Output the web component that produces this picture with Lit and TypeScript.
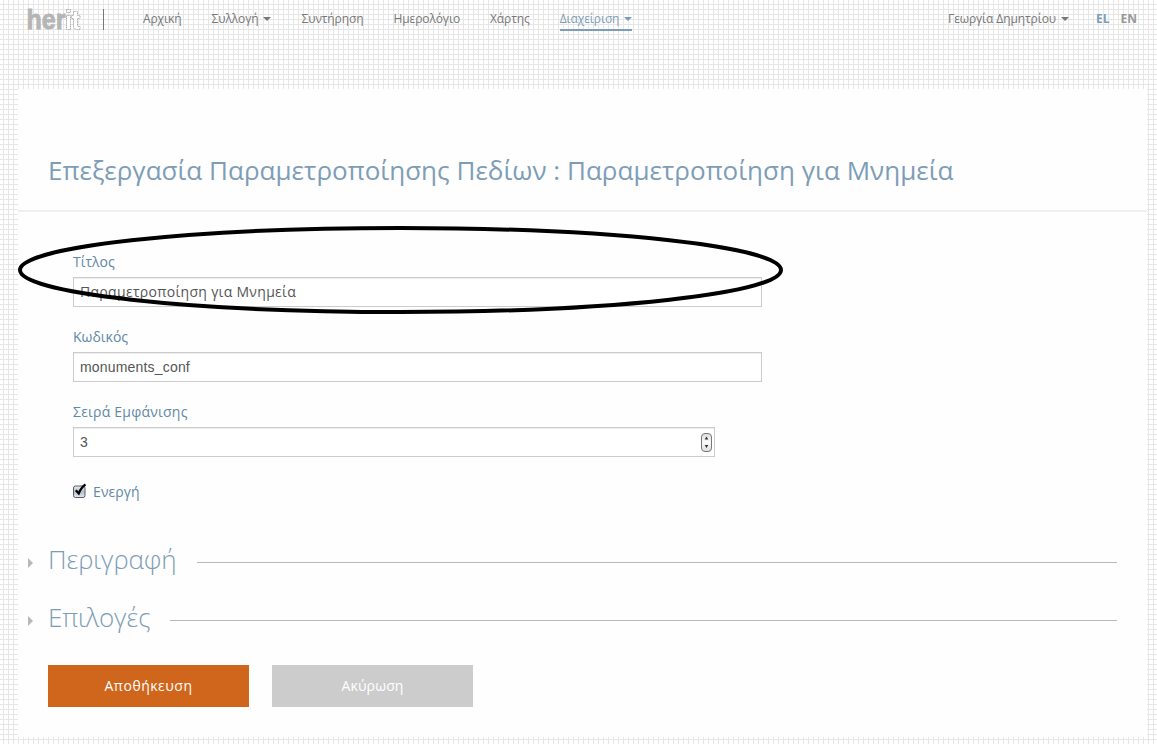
import { LitElement, html, css } from "lit";
import { customElement } from "lit/decorators.js";

@customElement("app-root")
export class AppRoot extends LitElement {
  static styles = css`
    :host {
      display: block;
      position: relative;
      box-sizing: border-box;
      width: 1157px;
      height: 744px;
      overflow: hidden;
      font-family: "Open Sans", "Noto Sans", sans-serif;
      color: #777;
      background-color: #fff;
      background-image: linear-gradient(to right, transparent 3px, #e6e6e6 3px, #e6e6e6 4px, transparent 4px),
        linear-gradient(to bottom, transparent 4px, #e6e6e6 4px);
      background-size: 5px 5px;
    }
    * { box-sizing: border-box; }
    header {
      display: flex;
      align-items: flex-start;
      height: 89px;
      padding: 9px 20px 0 28px;
      font-size: 12px;
      line-height: 20px;
      letter-spacing: -0.1px;
      white-space: nowrap;
    }
    .logo { display: block; width: 54px; height: 22px; overflow: visible; }
    .sep { width: 1px; height: 21px; margin: 0 39px 0 21px; background: #777; }
    nav { display: flex; gap: 30px; flex: 1; }
    .item { display: flex; align-items: center; height: 20px; }
    .active { height: 22px; border-bottom: 2px solid #7d9db6; color: #7d9db6; }
    .caret { margin-left: 5px; border: 4px solid transparent; border-top-color: currentColor; border-bottom: 0; }
    .lang { margin-left: 10px; font-weight: 700; letter-spacing: 0; color: #999; }
    .on { margin: 0 1px 0 27px; color: #7d9db6; }
    main { width: 1129px; height: 648px; margin-left: 18px; background: #fefefe; }
    h1 {
      height: 123px;
      margin: 0;
      padding: 61px 0 0 30px;
      border-bottom: 2px solid #f0f0f0;
      font-size: 26px;
      line-height: 40px;
      letter-spacing: 0.03px;
      font-weight: 400;
      color: #7d9db6;
      white-space: nowrap;
    }
    form { display: block; padding: 40px 0 0 55px; }
    .field { height: 75px; }
    label { display: block; height: 25px; font-size: 14px; line-height: 20px; color: #6188a6; }
    .wide { letter-spacing: 0.23px; }
    .box {
      display: flex;
      align-items: center;
      justify-content: space-between;
      width: 689px;
      height: 30px;
      padding: 0 1px 0 6px;
      border: 1px solid #ccc;
      box-shadow: inset 0 1px 1px rgba(0, 0, 0, 0.075);
      background: #fff;
      font: 14px/20px "Liberation Sans", sans-serif;
      letter-spacing: 0.18px;
      color: #555;
      white-space: nowrap;
    }
    .greek { font-family: "Open Sans", sans-serif; letter-spacing: 0.31px; }
    .short { width: 642px; }
    .check { display: flex; align-items: center; gap: 6px; height: 30px; }
    .check svg { margin-top: -2px; }
    .check label { height: 20px; letter-spacing: 0.1px; }
    .section { display: flex; align-items: center; width: 1089px; height: 58px; margin-left: 10px; }
    .first { margin-top: 23px; }
    .arrow { border: 5px solid transparent; border-left-color: #b8b8b8; border-right: 0; margin: 7px 15px 0 0; }
    h2 { margin: 0 20px 0 0; font-size: 26px; line-height: 40px; letter-spacing: -0.1px; font-weight: 300; color: #7d9db6; }
    .rule { flex: 1; height: 1px; margin-top: 7px; background: #b8b8b8; }
    .actions { display: flex; gap: 23px; padding: 19px 0 0 30px; }
    button {
      width: 201px;
      height: 42px;
      padding: 0;
      border: 0;
      border-radius: 0;
      background: #cf661b;
      font: 14px/20px "Open Sans", sans-serif;
      letter-spacing: 0.5px;
      color: #fff;
    }
    .cancel { background: #ccc; letter-spacing: 0.15px; }
    .ring { position: absolute; left: 18px; top: 226px; width: 766px; height: 88px; }
    .outline { fill: #fff; stroke: #a0a0a0; stroke-width: 0.9; }
    .word { font: 700 28px "Liberation Sans", sans-serif; letter-spacing: 0; fill: #b5b5b5; stroke: #b5b5b5; stroke-width: 0.9; }
  `;

  private field(label: string, value: string, extra = "", spinner = false) {
    return html`<div class="field">
      <label class=${spinner ? "wide" : ""}>${label}</label>
      <div class="box ${extra}"><span>${value}</span>${spinner
        ? html`<svg width="13" height="20" viewBox="0 0 13 20">
            <defs><linearGradient id="g" x2="0" y2="1"><stop stop-color="#ddd" /><stop offset=".5" stop-color="#fafafa" /><stop offset="1" stop-color="#ddd" /></linearGradient></defs>
            <rect x="1.5" y="1.5" width="10" height="18" rx="3.5" fill="url(#g)" stroke="#777" />
            <path d="M4.700 7.500 6.500 4.500 8.300 7.500zM4.700 13h3.600L6.500 16z" fill="#333" />
          </svg>`
        : ""}</div>
    </div>`;
  }

  private section(title: string, cls = "") {
    return html`<div class="section ${cls}"><i class="arrow"></i><h2>${title}</h2><span class="rule"></span></div>`;
  }

  render() {
    return html`
      <header>
        <svg class="logo" viewBox="0 0 54 22">
          <text class="word" x="-1.5" y="20.3" textLength="39" lengthAdjust="spacingAndGlyphs">her</text>
          <path class="outline" stroke-dasharray="1.2 .6" d="M38.500 .5h4v3h-4zM38.500 6.500h4v14h-4zM45.500 2.500h4v4h2.500v3h-2.500v7q0 1 2.500 1v3q-6.500.5-6.500-3v-8h-2v-3h2z" />
        </svg>
        <span class="sep"></span>
        <nav>
          <span class="item">Αρχική</span>
          <span class="item">Συλλογή<i class="caret"></i></span>
          <span class="item">Συντήρηση</span>
          <span class="item">Ημερολόγιο</span>
          <span class="item">Χάρτης</span>
          <span class="item active">Διαχείριση<i class="caret"></i></span>
        </nav>
        <span class="item">Γεωργία Δημητρίου<i class="caret"></i></span>
        <span class="lang on">EL</span><span class="lang">EN</span>
      </header>
      <main>
        <h1>Επεξεργασία Παραμετροποίησης Πεδίων : Παραμετροποίηση για Μνημεία</h1>
        <form>
          ${this.field("Τίτλος", "Παραμετροποίηση για Μνημεία", "greek")}
          ${this.field("Κωδικός", "monuments_conf")}
          ${this.field("Σειρά Εμφάνισης", "3", "short", true)}
          <div class="check">
            <svg width="14" height="16" viewBox="0 0 14 16">
              <defs><linearGradient id="c" x2="0" y2="1"><stop stop-color="#eee" /><stop offset=".5" stop-color="#b5bdca" /><stop offset="1" stop-color="#e5ebf2" /></linearGradient></defs>
              <rect x=".5" y="3" width="11.500" height="11.500" rx="2" fill="url(#c)" stroke="#555c68" />
              <path d="M2.800 7.200 5.700 10.500Q8 4.500 12.500 1.500" fill="none" stroke="#000" stroke-width="2.200" />
            </svg>
            <label>Ενεργή</label>
          </div>
        </form>
        ${this.section("Περιγραφή", "first")}
        ${this.section("Επιλογές")}
        <div class="actions">
          <button type="button">Αποθήκευση</button>
          <button type="button" class="cancel">Ακύρωση</button>
        </div>
      </main>
      <svg class="ring" viewBox="0 0 766 88">
        <ellipse cx="382.500" cy="44" rx="380.500" ry="42" fill="none" stroke="#000" stroke-width="4" />
      </svg>
    `;
  }
}
